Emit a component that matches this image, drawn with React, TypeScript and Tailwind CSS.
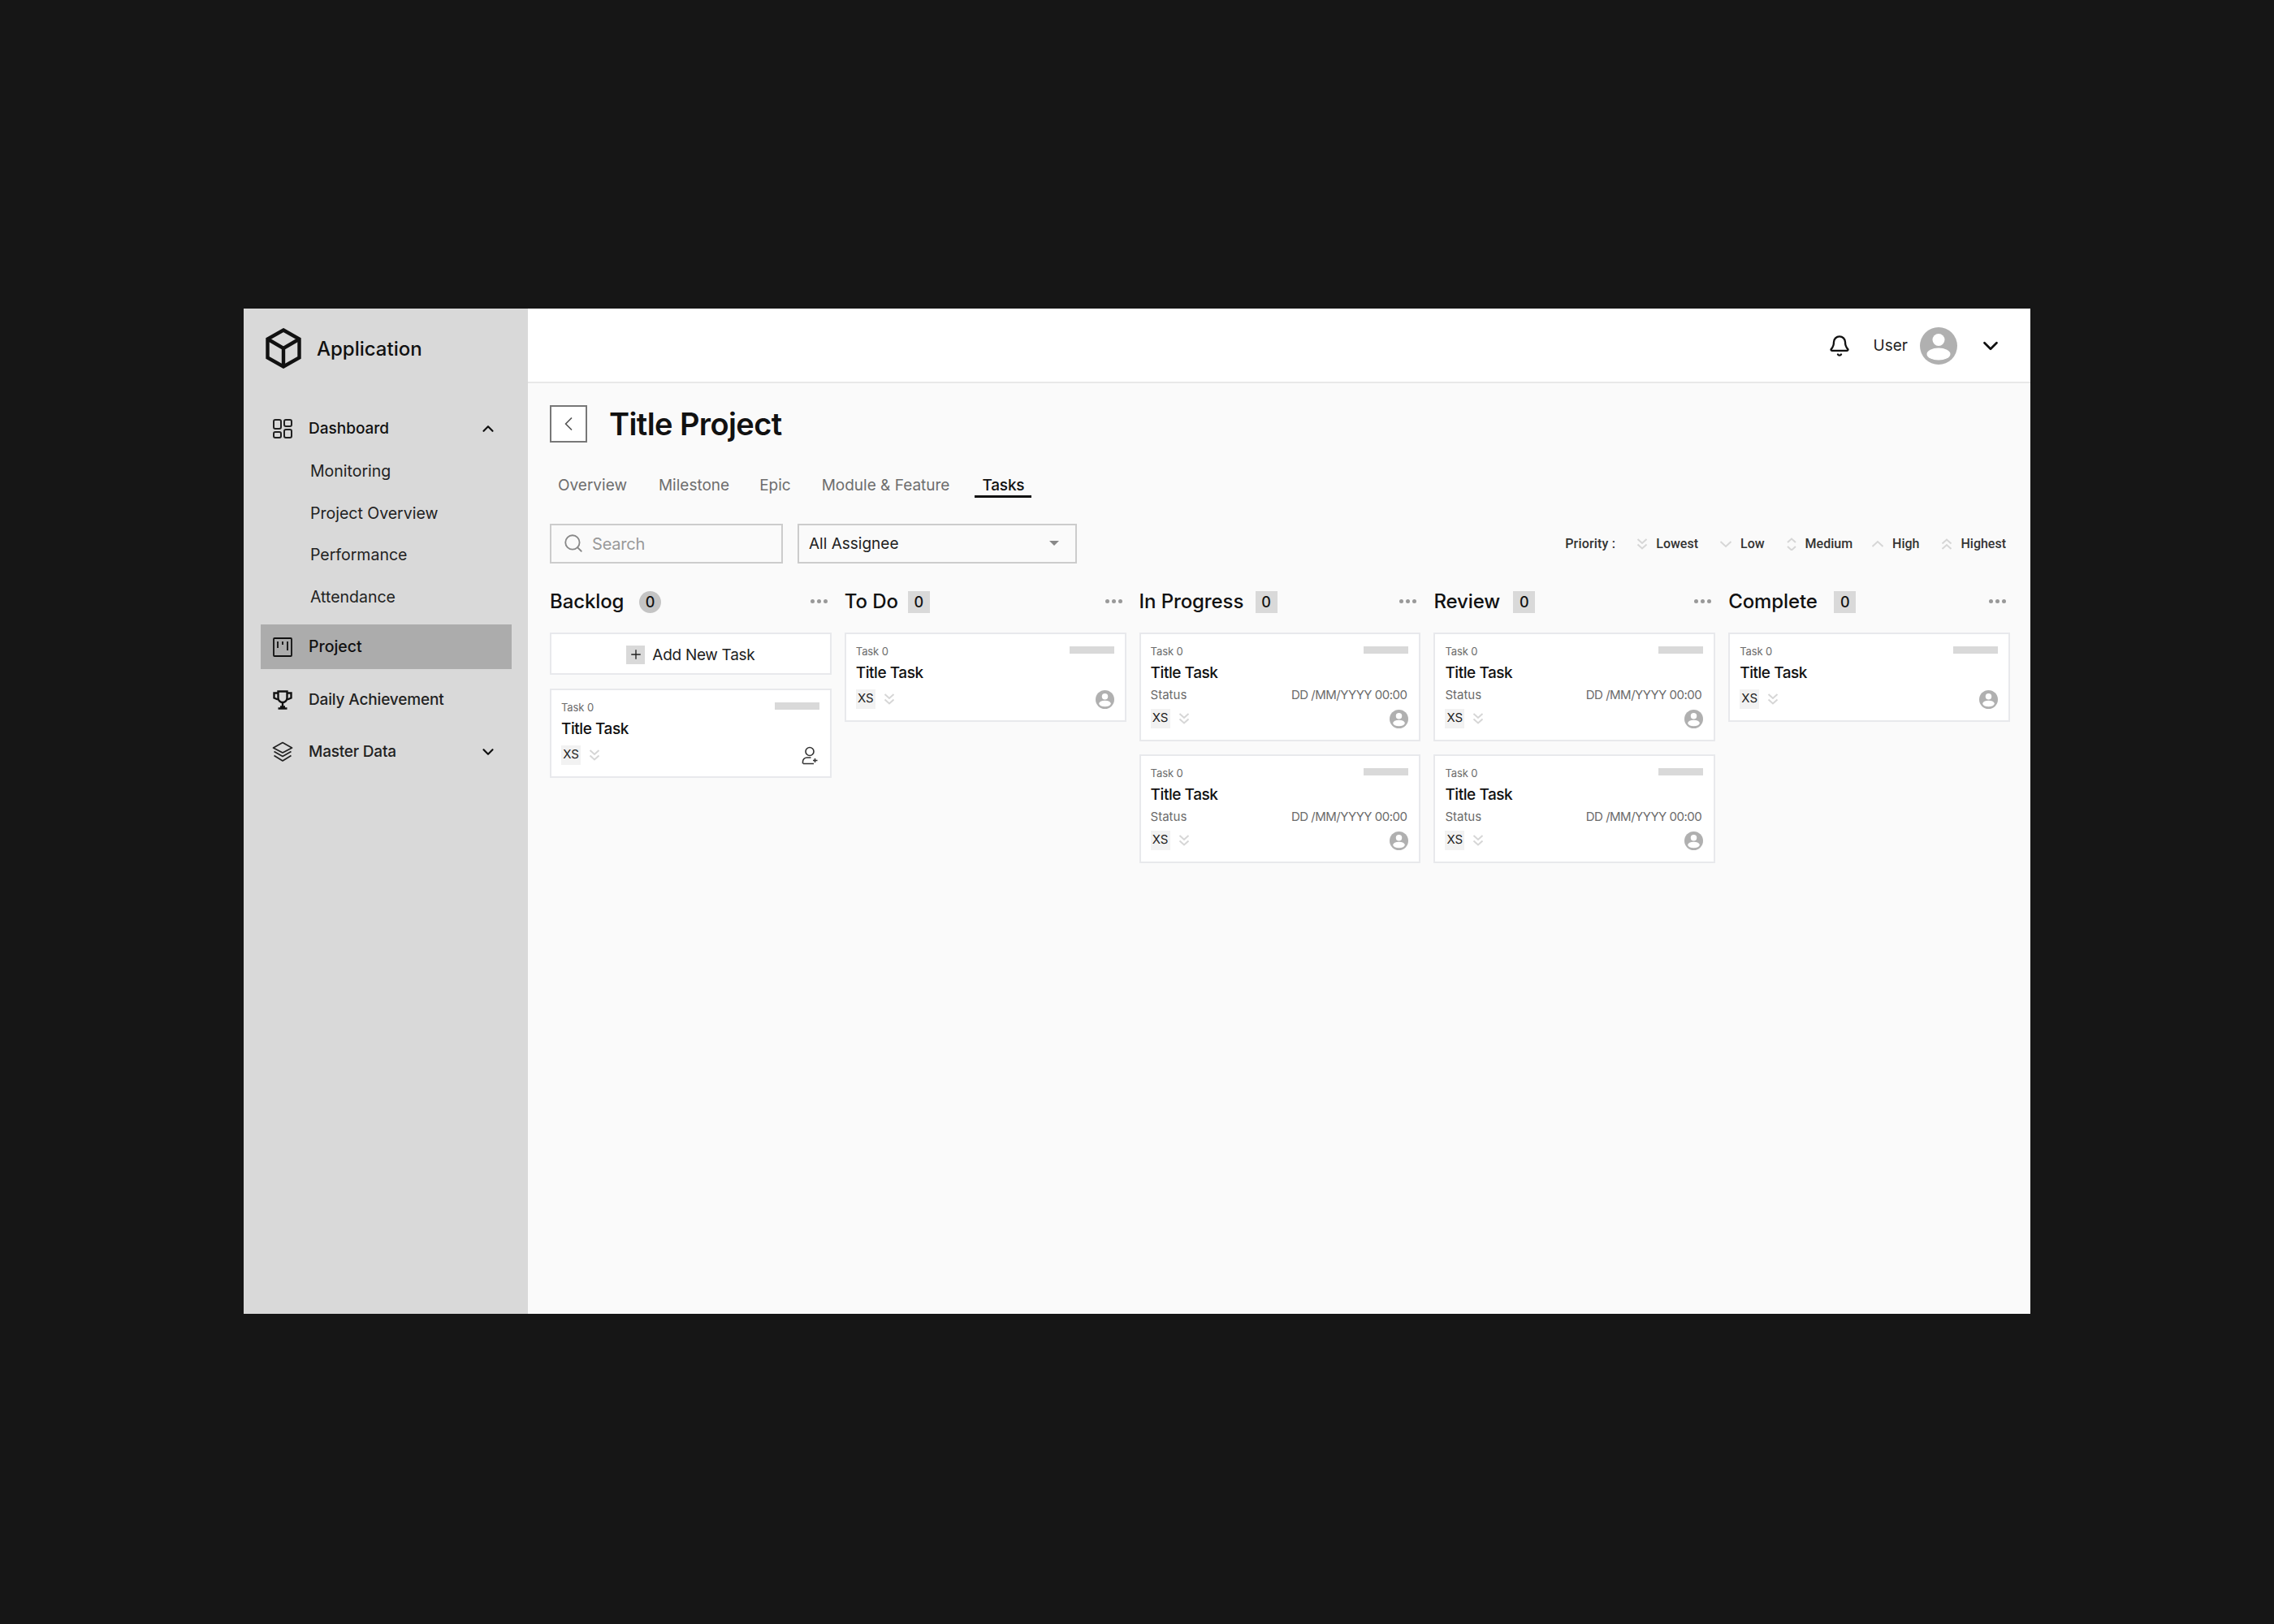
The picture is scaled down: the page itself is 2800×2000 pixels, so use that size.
import React from 'react';
import { Bell, ChevronDown, ChevronLeft, ChevronUp, Plus, Search } from 'lucide-react';

const subItems = ['Monitoring', 'Project Overview', 'Performance', 'Attendance'];

const tabs = [
  { label: 'Overview', className: 'ml-[10px]' },
  { label: 'Milestone', className: 'ml-[39px]' },
  { label: 'Epic', className: 'ml-[37px]' },
  { label: 'Module & Feature', className: 'ml-[38px]' },
];

const CubeLogo = () => (
  <svg width="44" height="50" viewBox="0 0 44 50" fill="none" stroke="#111" strokeWidth="4.4" strokeLinejoin="miter">
    <path d="M22 2.5 41.5 13.5V36.5L22 47.5 2.5 36.5V13.5Z" />
    <path d="M2.5 13.5 22 25 41.5 13.5M22 25V47.5" />
  </svg>
);

const GridIcon = () => (
  <svg width="24" height="24" viewBox="0 0 24 24" fill="none" stroke="#222" strokeWidth="2">
    <rect x="1" y="1" width="9" height="11" rx="2" />
    <rect x="14" y="1" width="9" height="8" rx="2" />
    <rect x="1" y="16" width="9" height="7" rx="2" />
    <rect x="14" y="13" width="9" height="10" rx="2" />
  </svg>
);

const BoardIcon = () => (
  <svg width="24" height="24" viewBox="0 0 24 24" fill="none" stroke="#111" strokeWidth="1.8">
    <rect x="1" y="1" width="22" height="22" rx="1" />
    <path d="M6 5v8M12 5v4M18 5v11" />
  </svg>
);

const TrophyIcon = () => (
  <svg width="24" height="24" viewBox="0 0 24 24" fill="none" stroke="#111" strokeWidth="2.4">
    <path d="M6.5 1.5h11v8a5.5 5.5 0 0 1-11 0Z" />
    <path d="M6 3.5H1.5v6L6 11.5M18 3.5h4.5v6L18 11.5M12 15.5v5M6.5 22.5h11M9 20.5h6" />
  </svg>
);

const LayersIcon = () => (
  <svg width="26" height="26" viewBox="0 0 26 26" fill="none" stroke="#222" strokeWidth="1.7" strokeLinejoin="round">
    <path d="M13 1.5 24.5 8 13 14 1.5 8Z" />
    <path d="M2.5 12.5 13 18.5 23.5 12.5M2.5 17.5 13 24 23.5 17.5" />
  </svg>
);

const Avatar = ({ size }: { size: number }) => (
  <svg width={size} height={size} viewBox="0 0 46 46" className="shrink-0">
    <circle cx="23" cy="23" r="23" fill="#b0b0b0" />
    <circle cx="23" cy="15.5" r="7.5" fill="#fff" />
    <ellipse cx="23" cy="33" rx="14.5" ry="7.5" fill="#fff" />
  </svg>
);

const AddUserIcon = () => (
  <svg width="22" height="23" viewBox="0 0 22 23" fill="none" stroke="#333" strokeWidth="1.6">
    <circle cx="10" cy="6.5" r="5" />
    <path d="M1.5 21.5v-2.5c0-3 2.5-5 5-5h5M2 21.5h13M16.5 15v5M14 17.5h5.5" />
  </svg>
);

const Chevrons = ({ kind, className }: { kind: string; className?: string }) => {
  const paths: Record<string, string> = {
    lowest: 'M1.5 2 7 7 12.5 2M1.5 8.5 7 13.5 12.5 8.5',
    low: 'M1.5 5 8 11 14.5 5',
    medium: 'M2 6 7 1.5 12 6M2 11 7 15.5 12 11',
    high: 'M1.5 11 8 5 14.5 11',
    highest: 'M1.5 7.5 7 2.5 12.5 7.5M1.5 14 7 9 12.5 14',
  };
  const wide = kind === 'low' || kind === 'high';
  return (
    <svg width={wide ? 16 : 14} height="16" viewBox={wide ? '0 0 16 16' : '0 0 14 16'} fill="none" stroke="#d6d6d6" strokeWidth="2" className={className}>
      <path d={paths[kind]} />
    </svg>
  );
};

const Dots = () => (
  <div className="flex gap-[3px] mr-[5px] -mt-[2px]">
    <span className="w-[5px] h-[5px] rounded-full bg-[#999]" />
    <span className="w-[5px] h-[5px] rounded-full bg-[#999]" />
    <span className="w-[5px] h-[5px] rounded-full bg-[#999]" />
  </div>
);

const TaskCard = ({ withStatus, addUser }: { withStatus?: boolean; addUser?: boolean }) => (
  <div className="bg-white border-2 border-[#e8e9ec] pt-[12px] pl-[12px] pr-[13px] pb-[14px] mb-[16px]">
    <div className="flex items-start justify-between h-[19px]">
      <span className="text-[13px] leading-[19px] text-[#6b6b6b] tracking-[-0.1px]">Task 0</span>
      <span className="w-[55px] h-[9px] bg-[#d9d9d9] mt-[3px]" />
    </div>
    <div className="text-[19px] leading-[28px] font-medium text-[#111] mt-[3px] tracking-[-0.45px]">Title Task</div>
    {withStatus && (
      <div className="flex justify-between h-[22px] pr-[2px] text-[15px] leading-[22px] text-[#6b6b6b] mt-[2px]">
        <span>Status</span>
        <span className="tracking-[-0.5px]">DD /MM/YYYY 00:00</span>
      </div>
    )}
    <div className="flex items-center justify-between h-[24px] mt-[6px]">
      <div className="flex items-center">
        <span className="w-[24px] h-[24px] bg-[#f2f2f2] text-[15px] leading-[22px] text-[#222] text-center">XS</span>
        <Chevrons kind="lowest" className="ml-[10px]" />
      </div>
      {addUser ? <AddUserIcon /> : <Avatar size={23} />}
    </div>
  </div>
);

const Column = ({ title, titleWidth, round, children }: { title: string; titleWidth: string; round?: boolean; children: React.ReactNode }) => (
  <div>
    <div className="flex items-center justify-between h-[28px] mt-[34px] mb-[24px]">
      <div className="flex items-center">
        <span className={`text-[24px] leading-[28px] font-medium text-[#111] tracking-[-0.1px] ${titleWidth}`}>{title}</span>
        <span className={`w-[27px] h-[27px] flex items-center justify-center text-[18px] font-medium text-[#111] ${round ? 'rounded-full bg-[#c4c4c4]' : 'bg-[#d9d9d9]'}`}>0</span>
      </div>
      <Dots />
    </div>
    {children}
  </div>
);

const priorities = [
  { kind: 'lowest', label: 'Lowest', className: 'ml-[26px]' },
  { kind: 'low', label: 'Low', className: 'ml-[26px]' },
  { kind: 'medium', label: 'Medium', className: 'ml-[26px]' },
  { kind: 'high', label: 'High', className: 'ml-[23px]' },
  { kind: 'highest', label: 'Highest', className: 'ml-[27px]' },
];

export default function App() {
  return (
    <div className="w-[2800px] h-[2000px] bg-[#161616] pt-[380px] pl-[300px] font-['Inter',sans-serif] overflow-hidden">
      <div className="flex w-[2200px] h-[1238px] bg-[#fafafa]">
        {/* Sidebar */}
        <aside className="w-[350px] shrink-0 bg-[#d9d9d9] text-[#111]">
          <div className="flex items-center h-[50px] mt-[24px] ml-[27px]">
            <CubeLogo />
            <span className="ml-[19px] pt-[2px] text-[24px] font-medium">Application</span>
          </div>
          <div className="flex items-center h-[28px] mt-[60px] ml-[36px] mr-[38px]">
            <GridIcon />
            <span className="ml-[20px] text-[19px] font-medium flex-1">Dashboard</span>
            <ChevronUp size={22} strokeWidth={2.4} />
          </div>
          <div className="ml-[82px] mt-[13px]">
            {subItems.map((item) => (
              <div key={item} className="h-[51.5px] flex items-center text-[19.5px] text-[#222]">
                {item}
              </div>
            ))}
          </div>
          <div className="flex items-center h-[55px] mt-[8px] ml-[21px] mr-[20px] pl-[15px] bg-[#acacac]">
            <BoardIcon />
            <span className="ml-[20px] text-[19.5px] font-medium">Project</span>
          </div>
          <div className="flex items-center h-[28px] mt-[24px] ml-[36px] mr-[38px]">
            <TrophyIcon />
            <span className="ml-[20px] text-[19px] font-medium text-[#222] tracking-[-0.15px]">Daily Achievement</span>
          </div>
          <div className="flex items-center h-[28px] mt-[36px] ml-[35px] mr-[38px]">
            <LayersIcon />
            <span className="ml-[19px] text-[19px] font-medium flex-1 text-[#222] tracking-[-0.2px]">Master Data</span>
            <ChevronDown size={22} strokeWidth={2.4} />
          </div>
        </aside>

        {/* Main */}
        <main className="flex-1">
          <header className="h-[92px] bg-white border-b-2 border-[#e8e8e8] flex items-center justify-end pt-[2px] pr-[34px]">
            <Bell size={28} strokeWidth={2} className="text-[#111]" />
            <span className="ml-[28px] mr-[15px] text-[19px] text-[#222]">User</span>
            <Avatar size={46} />
            <ChevronDown size={30} strokeWidth={2.2} className="ml-[26px] text-[#111]" />
          </header>

          <div className="pl-[27px] pr-[25px]">
            <div className="flex items-center mt-[27px] h-[46px]">
              <div className="w-[46px] h-[46px] border-2 border-[#777] bg-white flex items-center justify-center">
                <ChevronLeft size={28} strokeWidth={1.5} className="text-[#555]" />
              </div>
              <h1 className="ml-[27px] text-[38px] font-semibold text-[#111] tracking-[-0.6px]">Title Project</h1>
            </div>

            <div className="flex items-center h-[28px] mt-[39px] text-[19px] text-[#6e6e6e]">
              {tabs.map((tab) => (
                <span key={tab.label} className={tab.className}>{tab.label}</span>
              ))}
              <div className="ml-[31px] relative px-[9px] font-medium text-[#111] tracking-[-0.2px]">
                Tasks
                <span className="absolute left-0 right-0 -bottom-[1px] h-[3px] bg-[#111]" />
              </div>
            </div>

            <div className="flex items-center h-[48px] mt-[33px]">
              <div className="w-[287px] h-[49px] border-2 border-[#ccc] flex items-center pl-[14px]">
                <Search size={26} strokeWidth={1.7} className="text-[#888]" />
                <span className="ml-[10px] pt-[2px] text-[20px] text-[#999] tracking-[-0.2px]">Search</span>
              </div>
              <div className="ml-[18px] w-[344px] h-[49px] border-2 border-[#ccc] flex items-center pl-[12px] pr-[20px]">
                <span className="flex-1 pt-[2px] text-[19px] text-[#222]">All Assignee</span>
                <span className="w-0 h-0 border-x-[6px] border-x-transparent border-t-[6px] border-t-[#888]" />
              </div>
              <div className="ml-auto pr-[5px] pt-[2px] flex items-center font-['Roboto',sans-serif] font-medium text-[16px] text-[#333]">
                <span className="tracking-[0.2px]">Priority :</span>
                {priorities.map((p) => (
                  <span key={p.label} className={`flex items-center gap-[10px] ${p.className}`}>
                    <Chevrons kind={p.kind} />
                    {p.label}
                  </span>
                ))}
              </div>
            </div>

            <div className="grid grid-cols-5 gap-[16px]">
              <Column title="Backlog" titleWidth="w-[110px]" round>
                <div className="h-[52px] mt-[1px] mb-[17px] pt-[4px] bg-white border-2 border-[#e8e9ec] flex items-center justify-center text-[19px] text-[#222] tracking-[-0.3px]">
                  <span className="w-[23px] h-[23px] -mt-[2px] bg-[#d9d9d9] flex items-center justify-center mr-[9px]">
                    <Plus size={18} strokeWidth={1.8} />
                  </span>
                  Add New Task
                </div>
                <TaskCard addUser />
              </Column>
              <Column title="To Do" titleWidth="w-[78px]">
                <TaskCard />
              </Column>
              <Column title="In Progress" titleWidth="w-[143px]">
                <TaskCard withStatus />
                <TaskCard withStatus />
              </Column>
              <Column title="Review" titleWidth="w-[98px]">
                <TaskCard withStatus />
                <TaskCard withStatus />
              </Column>
              <Column title="Complete" titleWidth="w-[130px]">
                <TaskCard />
              </Column>
            </div>
          </div>
        </main>
      </div>
    </div>
  );
}
